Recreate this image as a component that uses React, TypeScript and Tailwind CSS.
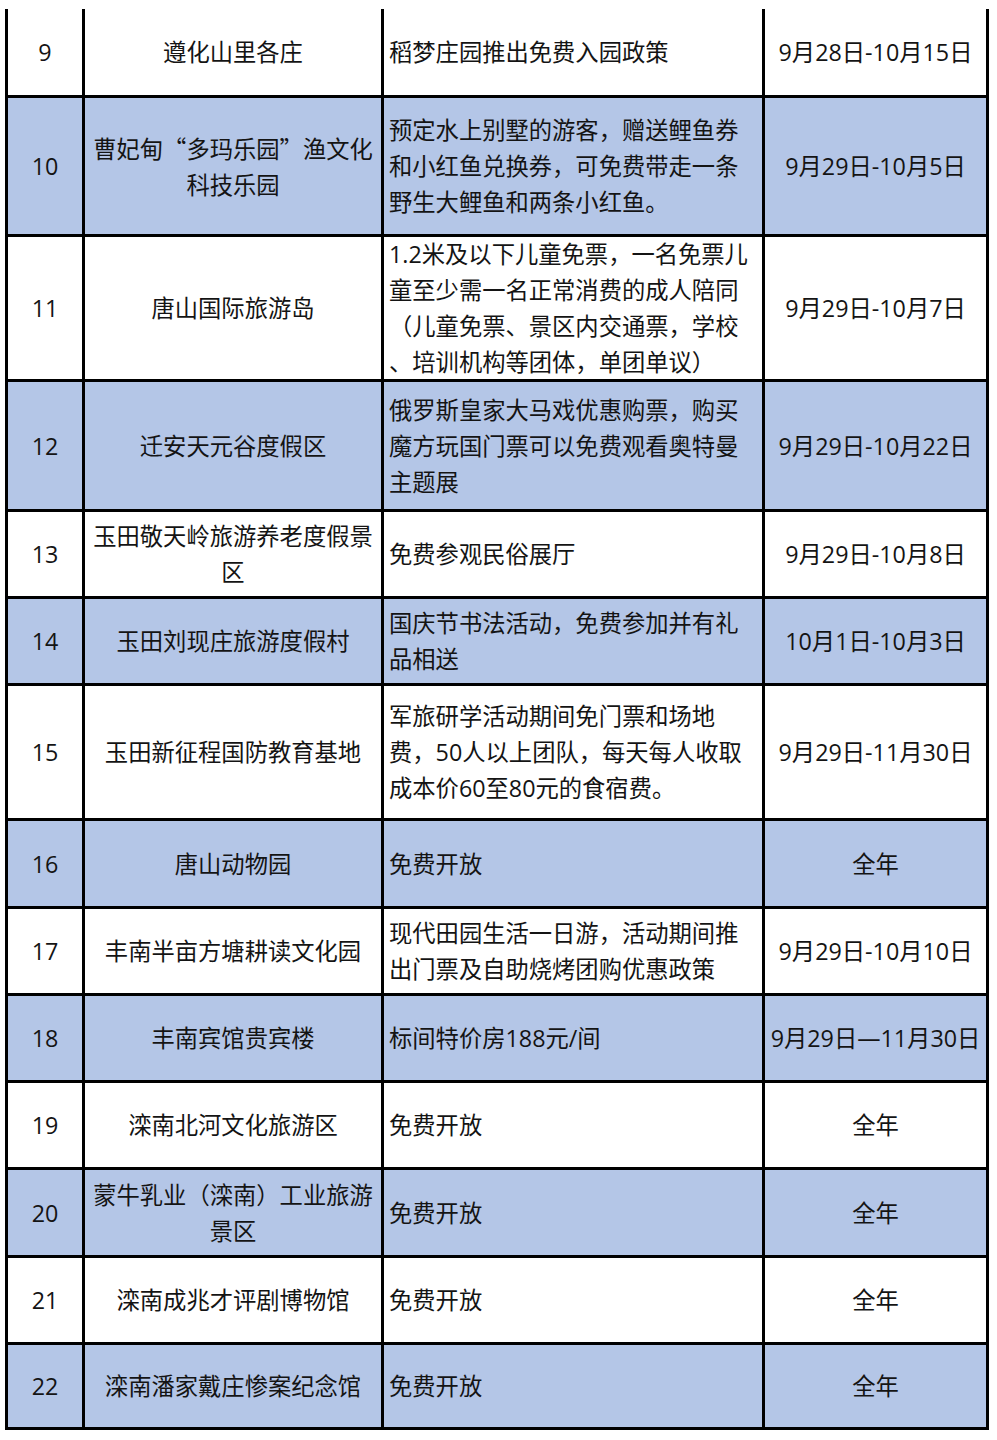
import React from 'react';

interface Row {
  no: number;
  name: React.ReactNode[];
  content: string[];
  date: string;
  h: string;
  blue: boolean;
}

const Q = ({ c }: { c: string }) => (
  <span style={{ fontFamily: '"Noto Sans CJK SC", sans-serif' }}>{c}</span>
);

const rows: Row[] = [
  { no: 9, name: ['遵化山里各庄'], content: ['稻梦庄园推出免费入园政策'], date: '9月28日-10月15日', h: 'h-[86px]', blue: false },
  { no: 10, name: [<>曹妃甸<Q c="“" />多玛乐园<Q c="”" />渔文化</>, '科技乐园'], content: ['预定水上别墅的游客，赠送鲤鱼券', '和小红鱼兑换券，可免费带走一条', '野生大鲤鱼和两条小红鱼。'], date: '9月29日-10月5日', h: 'h-[136px]', blue: true },
  { no: 11, name: ['唐山国际旅游岛'], content: ['1.2米及以下儿童免票，一名免票儿', '童至少需一名正常消费的成人陪同', '（儿童免票、景区内交通票，学校', '、培训机构等团体，单团单议）'], date: '9月29日-10月7日', h: 'h-[142px]', blue: false },
  { no: 12, name: ['迁安天元谷度假区'], content: ['俄罗斯皇家大马戏优惠购票，购买', '魔方玩国门票可以免费观看奥特曼', '主题展'], date: '9月29日-10月22日', h: 'h-[127px]', blue: true },
  { no: 13, name: ['玉田敬天岭旅游养老度假景', '区'], content: ['免费参观民俗展厅'], date: '9月29日-10月8日', h: 'h-[84px]', blue: false },
  { no: 14, name: ['玉田刘现庄旅游度假村'], content: ['国庆节书法活动，免费参加并有礼', '品相送'], date: '10月1日-10月3日', h: 'h-[84px]', blue: true },
  { no: 15, name: ['玉田新征程国防教育基地'], content: ['军旅研学活动期间免门票和场地', '费，50人以上团队，每天每人收取', '成本价60至80元的食宿费。'], date: '9月29日-11月30日', h: 'h-[132px]', blue: false },
  { no: 16, name: ['唐山动物园'], content: ['免费开放'], date: '全年', h: 'h-[85px]', blue: true },
  { no: 17, name: ['丰南半亩方塘耕读文化园'], content: ['现代田园生活一日游，活动期间推', '出门票及自助烧烤团购优惠政策'], date: '9月29日-10月10日', h: 'h-[84px]', blue: false },
  { no: 18, name: ['丰南宾馆贵宾楼'], content: ['标间特价房188元/间'], date: '9月29日—11月30日', h: 'h-[84px]', blue: true },
  { no: 19, name: ['滦南北河文化旅游区'], content: ['免费开放'], date: '全年', h: 'h-[84px]', blue: false },
  { no: 20, name: ['蒙牛乳业（滦南）工业旅游', '景区'], content: ['免费开放'], date: '全年', h: 'h-[85px]', blue: true },
  { no: 21, name: ['滦南成兆才评剧博物馆'], content: ['免费开放'], date: '全年', h: 'h-[84px]', blue: false },
  { no: 22, name: ['滦南潘家戴庄惨案纪念馆'], content: ['免费开放'], date: '全年', h: 'h-[82px]', blue: true },
];

export default function App() {
  return (
    <div
      className="w-[997px] h-[1440px] bg-white pt-[9px] text-[#141414]"
      style={{ fontFamily: '"Open Sans", "Noto Sans CJK SC", sans-serif' }}
    >
      <div className="ml-[5px] w-[984px] bg-black px-[3px] pb-[3px] grid grid-cols-[74px_296px_378px_221px] gap-[3px]">
        {rows.map(r => {
          const bg = r.blue ? 'bg-[#b4c6e7]' : 'bg-white';
          return (
            <React.Fragment key={r.no}>
              <div className={`${r.h} ${bg} flex items-center justify-center text-[23.3px] leading-[36px]`}>{r.no}</div>
              <div className={`${r.h} ${bg} flex flex-col items-center justify-center text-[23.3px] leading-[36px] whitespace-nowrap`}>
                {r.name.map((l, i) => <div key={i}>{l}</div>)}
              </div>
              <div className={`${r.h} ${bg} flex flex-col justify-center pl-[5px] text-[23.3px] leading-[36px] whitespace-nowrap`}>
                {r.content.map((l, i) => <div key={i}>{l}</div>)}
              </div>
              <div className={`${r.h} ${bg} flex items-center justify-center text-[23.3px] leading-[36px] whitespace-nowrap`}>{r.date}</div>
            </React.Fragment>
          );
        })}
      </div>
    </div>
  );
}
